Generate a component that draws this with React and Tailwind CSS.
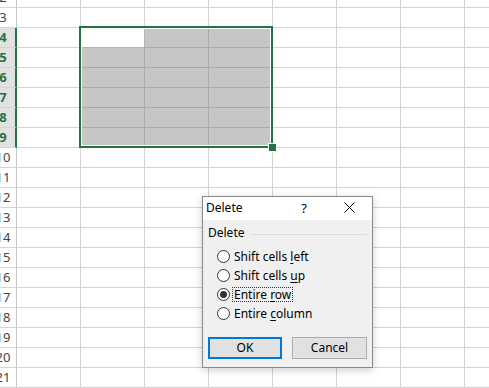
import React from "react";

function Radio({ checked, focus, children }) {
  return (
    <div className="flex items-center h-[19px]">
      <div className="w-[13px] h-[13px] rounded-full border border-[#333333] bg-white flex items-center justify-center shrink-0">
        {checked && <div className="w-[7px] h-[7px] rounded-full bg-[#333333]" />}
      </div>
      <span
        className={`ml-[2px] px-[1px] leading-[13px] border ${
          focus ? "border-dotted border-[#333333]" : "border-transparent"
        } text-[12px] text-black whitespace-nowrap`}
      >
        {children}
      </span>
    </div>
  );
}

export default function App() {
  const rows = Array.from({ length: 20 }, (_, i) => i + 2);
  const cols = [0, 1, 2, 3, 4, 5, 6, 7];
  return (
    <div className="relative w-[489px] h-[388px] overflow-hidden bg-white font-['Noto_Sans',sans-serif]">
      <div className="flex flex-col -mt-[12px]">
        {rows.map((r) => {
          const selRow = r >= 4 && r <= 9;
          return (
            <div key={r} className="flex h-[20px] shrink-0">
              <div
                className={`w-[17px] shrink-0 h-full overflow-hidden border-b border-b-[#d4d4d4] flex items-center ${
                  selRow
                    ? "border-r-2 border-r-[#217346] bg-[#e1e1e1] text-[#217346] font-bold"
                    : "border-r border-r-[#c6c6c6] text-[#444444]"
                }`}
              >
                <span className="w-[30px] -ml-[12px] shrink-0 text-center text-[13px] leading-[19px]">
                  {r}
                </span>
              </div>
              {cols.map((c) => {
                const sel = selRow && c >= 1 && c <= 3;
                const active = r === 4 && c === 1;
                let cls = "border-[#d4d4d4] bg-white";
                if (active) cls = "border-[#b4b4b4] bg-white";
                else if (sel) cls = "border-[#ababab] bg-[#c6c6c6]";
                return (
                  <div
                    key={c}
                    className={`w-[64px] h-full shrink-0 border-r border-b ${cls}`}
                  />
                );
              })}
            </div>
          );
        })}
      </div>

      {/* selection border */}
      <div className="absolute left-[79px] top-[26px] w-[194px] h-[122px] border-2 border-[#217346] shadow-[inset_0_0_0_1px_#ffffff]" />
      {/* fill handle */}
      <div className="absolute left-[268px] top-[143px] w-[9px] h-[9px] bg-[#217346] border border-white" />

      {/* dialog */}
      <div className="absolute left-[202px] top-[196px] w-[171px] h-[172px] border border-[#8a8a8a] bg-[#f0f0f0] flex flex-col shadow-[0_2px_8px_rgba(0,0,0,0.2)]">
        <div className="h-[23px] bg-white flex items-center shrink-0 pb-[2px]">
          <span className="pl-[3px] text-[12px] leading-[16px] text-black">Delete</span>
          <div className="flex-1" />
          <div className="w-[44px] flex justify-center text-[13px] leading-[16px] text-black">?</div>
          <div className="w-[46px] flex justify-center">
            <svg width="11" height="11" viewBox="0 0 11 11">
              <path d="M0.5 0.5 L10.5 10.5 M10.5 0.5 L0.5 10.5" stroke="#000" strokeWidth="1" />
            </svg>
          </div>
        </div>
        <div className="flex flex-col px-[5px]">
          <div className="flex items-center mt-[5px] h-[16px]">
            <span className="text-[12px] leading-[16px] text-black">Delete</span>
            <div className="flex-1 h-px bg-[#dcdcdc] ml-[5px] mt-[2px]" />
          </div>
          <div className="flex flex-col mt-[6px] pl-[9px]">
            <Radio>
              Shift cells <span className="underline underline-offset-[2px]">l</span>eft
            </Radio>
            <Radio>
              Shift cells <span className="underline underline-offset-[2px]">u</span>p
            </Radio>
            <Radio checked focus>
              Entire <span className="underline underline-offset-[2px]">r</span>ow
            </Radio>
            <Radio>
              Entire <span className="underline underline-offset-[2px]">c</span>olumn
            </Radio>
          </div>
          <div className="flex mt-[14px] gap-[10px]">
            <button className="w-[74px] h-[22px] border-2 border-[#0078d7] bg-[#e1e1e1] text-[12px] leading-[16px] text-black">
              OK
            </button>
            <button className="w-[75px] h-[22px] border border-[#adadad] bg-[#e1e1e1] text-[12px] leading-[16px] text-black">
              Cancel
            </button>
          </div>
        </div>
      </div>
    </div>
  );
}
